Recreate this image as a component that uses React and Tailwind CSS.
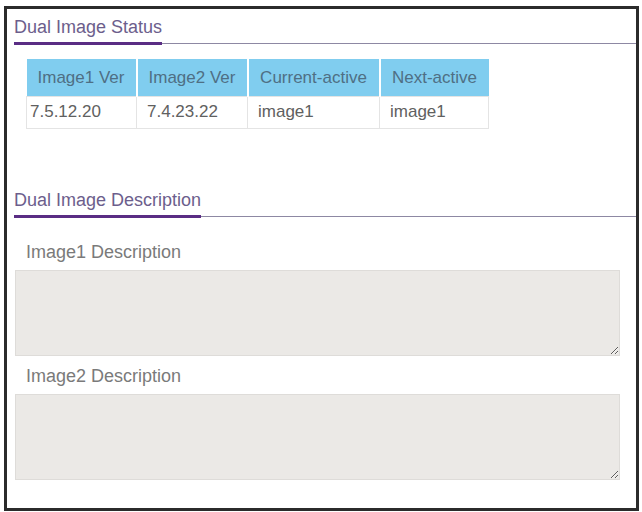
import React from "react";

const columns = [
  { label: "Image1 Ver", value: "7.5.12.20", width: "w-[110px]" },
  { label: "Image2 Ver", value: "7.4.23.22", width: "w-[111px]" },
  { label: "Current-active", value: "image1", width: "w-[132px]" },
  { label: "Next-active", value: "image1", width: "w-[109px]" },
];

const SectionTitle = ({ children, className = "" }) => (
  <div className={`ml-[7px] flex border-b border-[#8d88a3] ${className}`}>
    <span className="-mb-[2px] border-b-[3px] border-[#5a2d84] pb-[4px] text-[18px] leading-[22px] text-[#6c5e8c]">
      {children}
    </span>
  </div>
);

const DescriptionField = ({ label, className = "" }) => (
  <div className={className}>
    <div className="pl-[19px] text-[18px] leading-[22px] text-[#7a7a7a]">{label}</div>
    <textarea
      className="mt-[7px] ml-[8px] block h-[86px] w-[605px] border border-[#dedcd9] bg-[#ebe9e6] outline-none"
      defaultValue=""
    />
  </div>
);

const App = () => {
  return (
    <div className="min-h-screen bg-white pt-[6px] pl-[4px]" style={{ fontFamily: '"Liberation Sans", Arial, sans-serif' }}>
      <div className="h-[505px] w-[635px] border-[3px] border-[#2b2b2b] pt-[7px]">
        <SectionTitle>Dual Image Status</SectionTitle>

        <table className="mt-[15px] ml-[19px] border-collapse text-[17px]">
          <thead>
            <tr>
              {columns.map((c, i) => (
                <th
                  key={c.label}
                  className={`${c.width} h-[37px] bg-[#80cdef] px-1 text-center font-normal text-[#4f6f84] ${i < columns.length - 1 ? "border-r-2 border-white" : ""}`}
                >
                  {c.label}
                </th>
              ))}
            </tr>
          </thead>
          <tbody>
            <tr>
              {columns.map((c, i) => (
                <td
                  key={c.label}
                  className={`h-[32px] border border-[#e4e4e4] text-left text-[#606060] ${i === 0 ? "pl-[3px]" : "pl-[10px]"}`}
                >
                  {c.value}
                </td>
              ))}
            </tr>
          </tbody>
        </table>

        <SectionTitle className="mt-[60px]">Dual Image Description</SectionTitle>

        <DescriptionField label="Image1 Description" className="mt-[24px]" />
        <DescriptionField label="Image2 Description" className="mt-[9px]" />
      </div>
    </div>
  );
};

export default App;
